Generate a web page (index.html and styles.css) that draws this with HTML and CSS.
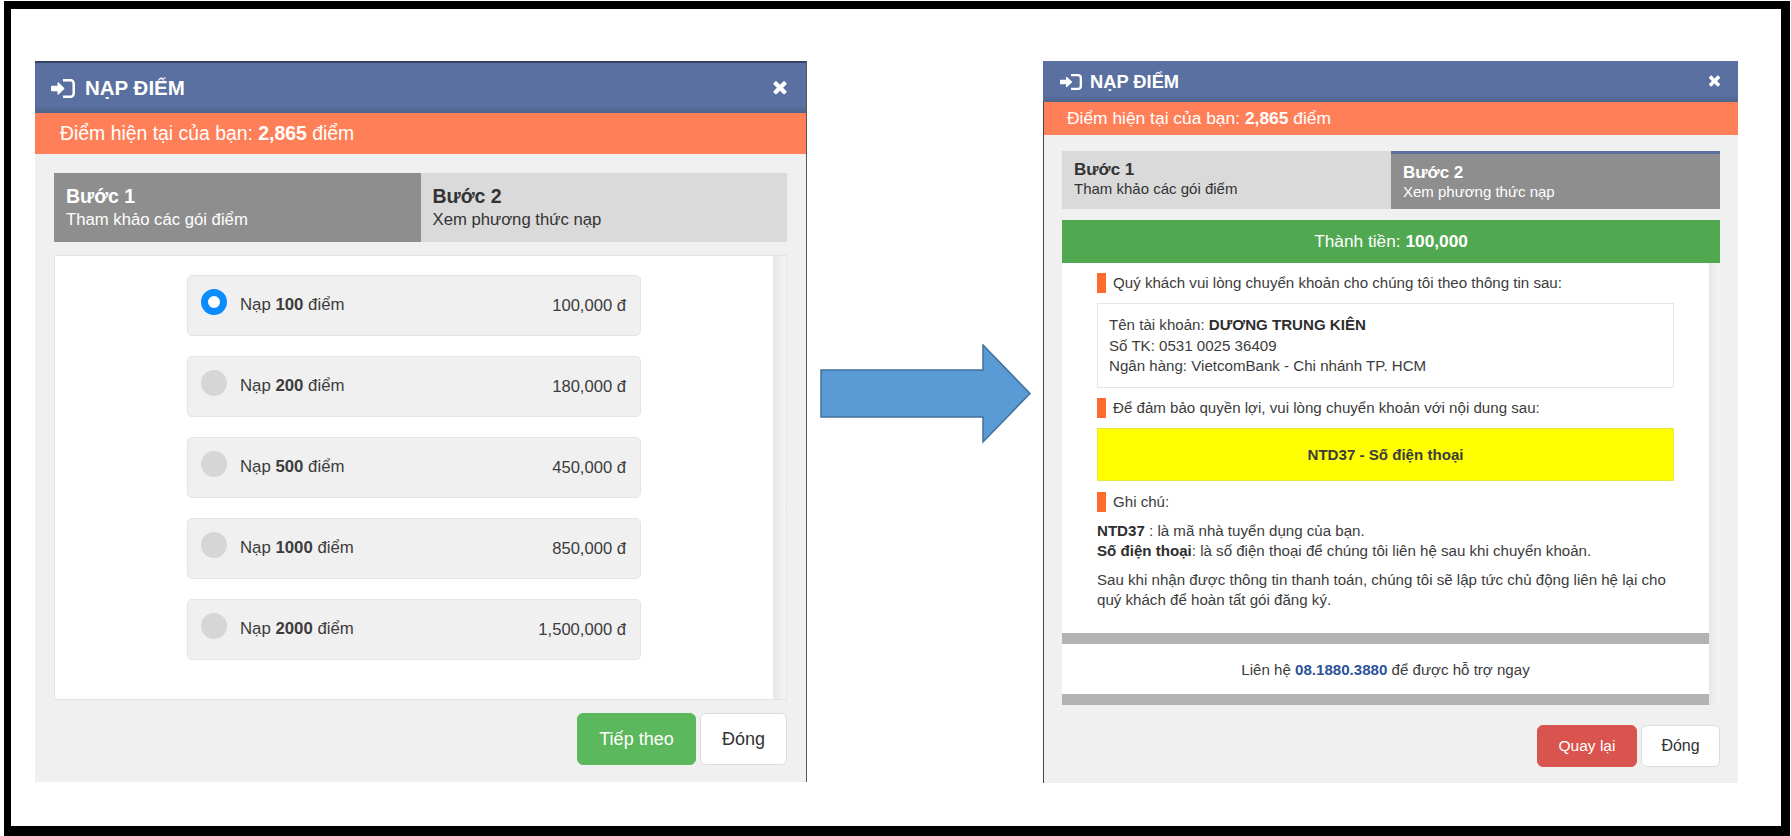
FILE: index.html
```html
<!DOCTYPE html>
<html lang="vi">
<head>
<meta charset="utf-8">
<title>Nạp điểm</title>
<link rel="stylesheet" href="styles.css">
</head>
<body>
<div class="frame">
  <section class="modal modal-a">
    <header class="head">
      <div class="title">
        <svg class="ico-in" viewBox="0 0 24 19" preserveAspectRatio="none"><path fill="#fff" d="M1 6.800H6.500V3.800Q6.500 3 7.300 3.300L13 8.800Q13.700 9.500 13 10.200L7.300 15.700Q6.500 16 6.500 15.200V12.200H1Q0 12.200 0 11.200V7.800Q0 6.800 1 6.800Z"/><path fill="none" stroke="#fff" stroke-width="2.500" d="M12 1.300H19.500A3.200 3.200 0 0 1 22.700 4.500V14.500A3.200 3.200 0 0 1 19.500 17.700H12"/></svg>
        <span>NẠP ĐIỂM</span>
      </div>
      <svg class="ico-x" viewBox="0 0 1408 1792"><path fill="#fff" d="M1298 1322q0 40-28 68l-136 136q-28 28-68 28t-68-28l-294-294-294 294q-28 28-68 28t-68-28l-136-136q-28-28-28-68t28-68l294-294-294-294q-28-28-28-68t28-68l136-136q28-28 68-28t68 28l294 294 294-294q28-28 68-28t68 28l136 136q28 28 28 68t-28 68l-294 294 294 294q28 28 28 68z"/></svg>
    </header>
    <div class="points">Điểm hiện tại của bạn: <b>2,865</b> điểm</div>
    <div class="body">
      <div class="tabs">
        <div class="tab on"><b>Bước 1</b><span>Tham khảo các gói điểm</span></div>
        <div class="tab"><b>Bước 2</b><span>Xem phương thức nạp</span></div>
      </div>
      <div class="box">
        <div class="list">
          <div class="item"><i class="radio sel"></i><span class="lbl">Nạp <b>100</b> điểm</span><span class="price">100,000 đ</span></div>
          <div class="item"><i class="radio"></i><span class="lbl">Nạp <b>200</b> điểm</span><span class="price">180,000 đ</span></div>
          <div class="item"><i class="radio"></i><span class="lbl">Nạp <b>500</b> điểm</span><span class="price">450,000 đ</span></div>
          <div class="item"><i class="radio"></i><span class="lbl">Nạp <b>1000</b> điểm</span><span class="price">850,000 đ</span></div>
          <div class="item"><i class="radio"></i><span class="lbl">Nạp <b>2000</b> điểm</span><span class="price">1,500,000 đ</span></div>
        </div>
        <div class="sbar"></div>
      </div>
      <div class="foot">
        <button class="btn next">Tiếp theo</button>
        <button class="btn close">Đóng</button>
      </div>
    </div>
  </section>

  <svg class="arrow" viewBox="0 0 212 100"><path fill="#5b9bd5" stroke="#41719c" stroke-width="1.500" d="M1 26H163V1L210 49.500 163 98V73H1Z"/></svg>

  <section class="modal modal-b">
    <header class="head">
      <div class="title">
        <svg class="ico-in" viewBox="0 0 24 19" preserveAspectRatio="none"><path fill="#fff" d="M1 6.800H6.500V3.800Q6.500 3 7.300 3.300L13 8.800Q13.700 9.500 13 10.200L7.300 15.700Q6.500 16 6.500 15.200V12.200H1Q0 12.200 0 11.200V7.800Q0 6.800 1 6.800Z"/><path fill="none" stroke="#fff" stroke-width="2.500" d="M12 1.300H19.500A3.200 3.200 0 0 1 22.700 4.500V14.500A3.200 3.200 0 0 1 19.500 17.700H12"/></svg>
        <span>NẠP ĐIỂM</span>
      </div>
      <svg class="ico-x" viewBox="0 0 1408 1792"><path fill="#fff" d="M1298 1322q0 40-28 68l-136 136q-28 28-68 28t-68-28l-294-294-294 294q-28 28-68 28t-68-28l-136-136q-28-28-28-68t28-68l294-294-294-294q-28-28-28-68t28-68l136-136q28-28 68-28t68 28l294 294 294-294q28-28 68-28t68 28l136 136q28 28 28 68t-28 68l-294 294 294 294q28 28 28 68z"/></svg>
    </header>
    <div class="points">Điểm hiện tại của bạn: <b>2,865</b> điểm</div>
    <div class="body">
      <div class="tabs">
        <div class="tab"><b>Bước 1</b><span>Tham khảo các gói điểm</span></div>
        <div class="tab on"><b>Bước 2</b><span>Xem phương thức nạp</span></div>
      </div>
      <div class="total">Thành tiền: <b>100,000</b></div>
      <div class="box">
        <div class="detail">
          <div class="inner">
            <p class="mark">Quý khách vui lòng chuyển khoản cho chúng tôi theo thông tin sau:</p>
            <div class="acct">
              <p>Tên tài khoản: <b>DƯƠNG TRUNG KIÊN</b></p>
              <p>Số TK: 0531 0025 36409</p>
              <p>Ngân hàng: VietcomBank - Chi nhánh TP. HCM</p>
            </div>
            <p class="mark m2">Để đảm bảo quyền lợi, vui lòng chuyển khoản với nội dung sau:</p>
            <div class="code">NTD37 - Số điện thoại</div>
            <p class="mark m3">Ghi chú:</p>
            <p class="note"><b>NTD37</b> : là mã nhà tuyển dụng của bạn.<br><b>Số điện thoại</b>: là số điện thoại để chúng tôi liên hệ sau khi chuyển khoản.</p>
            <p class="note n2">Sau khi nhận được thông tin thanh toán, chúng tôi sẽ lập tức chủ động liên hệ lại cho quý khách để hoàn tất gói đăng ký.</p>
          </div>
          <div class="band"></div>
          <div class="contact">Liên hệ <b>08.1880.3880</b> để được hỗ trợ ngay</div>
          <div class="band"></div>
        </div>
        <div class="sbar"></div>
      </div>
      <div class="foot">
        <button class="btn back">Quay lại</button>
        <button class="btn close">Đóng</button>
      </div>
    </div>
  </section>
</div>
</body>
</html>
```
FILE: styles.css
```css
* { box-sizing: border-box; }
html, body { margin: 0; padding: 0; background: #fff; }
body { width: 1791px; height: 836px; overflow: hidden; font-family: "Liberation Sans", Arial, sans-serif; color: #333; }
p { margin: 0; }
.frame {
  width: 1786px; height: 835px; margin: 1px 0 0 4px;
  border: solid #000; border-width: 8px 9px 10px 7px;
  background: #fff; display: flex; align-items: flex-start; padding-top: 52px;
}
.modal { background: #f0f0f0; display: flex; flex-direction: column; flex: none; }
.modal-a { width: 772px; height: 721px; margin-left: 24px; border-right: 1px solid #555; }
.modal-b { width: 695px; height: 722px; margin-left: 11px; border-left: 1px solid #444; }
.arrow { width: 212px; height: 100px; flex: none; margin: 283px 0 0 13px; }
.head {
  background: linear-gradient(#5a70a0, #5a70a0 85%, #4f6389);
  color: #fff; display: flex; align-items: center; justify-content: space-between; flex: none;
}
.modal-a .head { height: 52px; padding: 0 18px 0 16px; border-top: 2px solid #34415f; }
.modal-b .head { height: 41px; padding: 0 17px 0 17px; margin-left: -1px; }
.title { display: flex; align-items: center; font-weight: 700; }
.modal-a .title { font-size: 20.500px; gap: 10px; }
.modal-b .title { font-size: 18.300px; gap: 8px; }
.modal-a .ico-in { width: 24px; height: 19px; }
.modal-b .ico-in { width: 22px; height: 16px; }
.modal-a .ico-x { width: 16px; height: 20px; margin-bottom: 3px; }
.modal-b .ico-x { width: 13px; height: 17px; margin-bottom: 2px; }
.points { background: #ff7f58; color: #fff; flex: none; display: flex; align-items: center; white-space: pre; }
.points b { font-weight: 700; }
.modal-a .points { height: 41px; padding-left: 25px; font-size: 19.400px; }
.modal-b .points { height: 33px; padding-left: 23px; font-size: 17.400px; }
.body { flex: 1; display: flex; flex-direction: column; min-height: 0; }
.modal-a .body { padding: 19px 19px 0 19px; }
.modal-b .body { padding: 16px 18px 0 18px; }
.tabs { display: flex; flex: none; background: #dadada; }
.tab { flex: 1 1 0; display: flex; flex-direction: column; color: #333; }
.tab.on { background: #8e8e8e; color: #fff; }
.tab b, .tab span { display: block; }
.modal-a .tabs { height: 69px; }
.modal-a .tab { padding: 11px 0 0 12px; }
.modal-a .tab b { font-size: 19.500px; line-height: 24px; }
.modal-a .tab span { font-size: 16.700px; line-height: 23px; }
.modal-b .tabs { height: 58px; }
.modal-b .tab { padding: 8px 0 0 12px; }
.modal-b .tab.on { border-top: 3px solid #5a70a0; padding-top: 8px; }
.modal-b .tab b { font-size: 17px; line-height: 21px; }
.modal-b .tab span { font-size: 15px; line-height: 18px; }
.total { flex: none; margin-top: 11px; height: 43px; background: #50a850; color: #fff; font-size: 17.300px; display: flex; align-items: center; justify-content: center; white-space: pre; }
.box { display: flex; background: #fff; flex: none; }
.modal-a .box { margin-top: 13px; height: 445px; border: 1px solid #e4e4e4; }
.modal-b .box { height: 442px; }
.sbar { flex: none; width: 13px; background: linear-gradient(90deg, #e6e6e6, #f4f4f4); }
.modal-b .sbar { width: 11px; }
.list { flex: 1; display: flex; flex-direction: column; align-items: center; gap: 20px; padding-top: 19px; }
.item { width: 454px; height: 61px; background: #f0f0f0; border: 1px solid #e4e4e4; border-radius: 5px; display: flex; align-items: flex-start; padding: 13px 14px 0 13px; font-size: 16.800px; color: #3c3c3c; }
.radio { flex: none; width: 26px; height: 26px; border-radius: 50%; background: #d6d6d6; }
.radio.sel { background: #fff; border: 7.500px solid #0a8cff; }
.lbl { margin: 6px 0 0 13px; line-height: 20px; }
.price { margin: 7px 0 0 auto; line-height: 20px; font-size: 16.600px; }
.foot { display: flex; justify-content: flex-end; gap: 4px; flex: none; }
.modal-a .foot { margin-top: 13px; }
.modal-b .foot { margin-top: 20px; }
.btn { font-family: inherit; border-radius: 6px; cursor: pointer; padding: 0; }
.modal-a .btn { height: 52px; font-size: 18px; }
.modal-b .btn { height: 42px; font-size: 16px; }
.close { background: #fff; border: 1px solid #ddd; color: #333; }
.modal-a .close { width: 87px; }
.modal-b .close { width: 79px; }
.next { background: #5cb85c; border: 1px solid #5cb85c; color: #fff; width: 119px; }
.back { background: #d9534f; border: 1px solid #d9534f; color: #fff; width: 100px; }
.modal-b .back { font-size: 15.500px; }
.detail { flex: 1; font-size: 15.100px; color: #3c3c3c; min-width: 0; }
.detail b { color: #2e2e2e; }
.inner { height: 370px; padding: 10px 35px 0 35px; }
.mark { border-left: 9px solid #ff6b2c; padding-left: 7px; height: 20px; line-height: 20px; }
.m2 { margin-top: 10px; }
.m3 { margin-top: 11px; }
.acct { margin-top: 10px; height: 85px; border: 1px solid #e6e6e6; padding: 11px 11px 0 11px; line-height: 20.500px; }
.code { margin-top: 10px; height: 53px; background: #ff0; border: 1px solid #e8e840; display: flex; align-items: center; justify-content: center; font-weight: 700; }
.note { line-height: 19.500px; margin-top: 9px; }
.n2 { margin-top: 10px; }
.band { height: 11px; background: #b3b3b3; }
.contact { height: 50px; display: flex; align-items: center; justify-content: center; white-space: pre; }
.contact b { color: #2d5299; }
```
